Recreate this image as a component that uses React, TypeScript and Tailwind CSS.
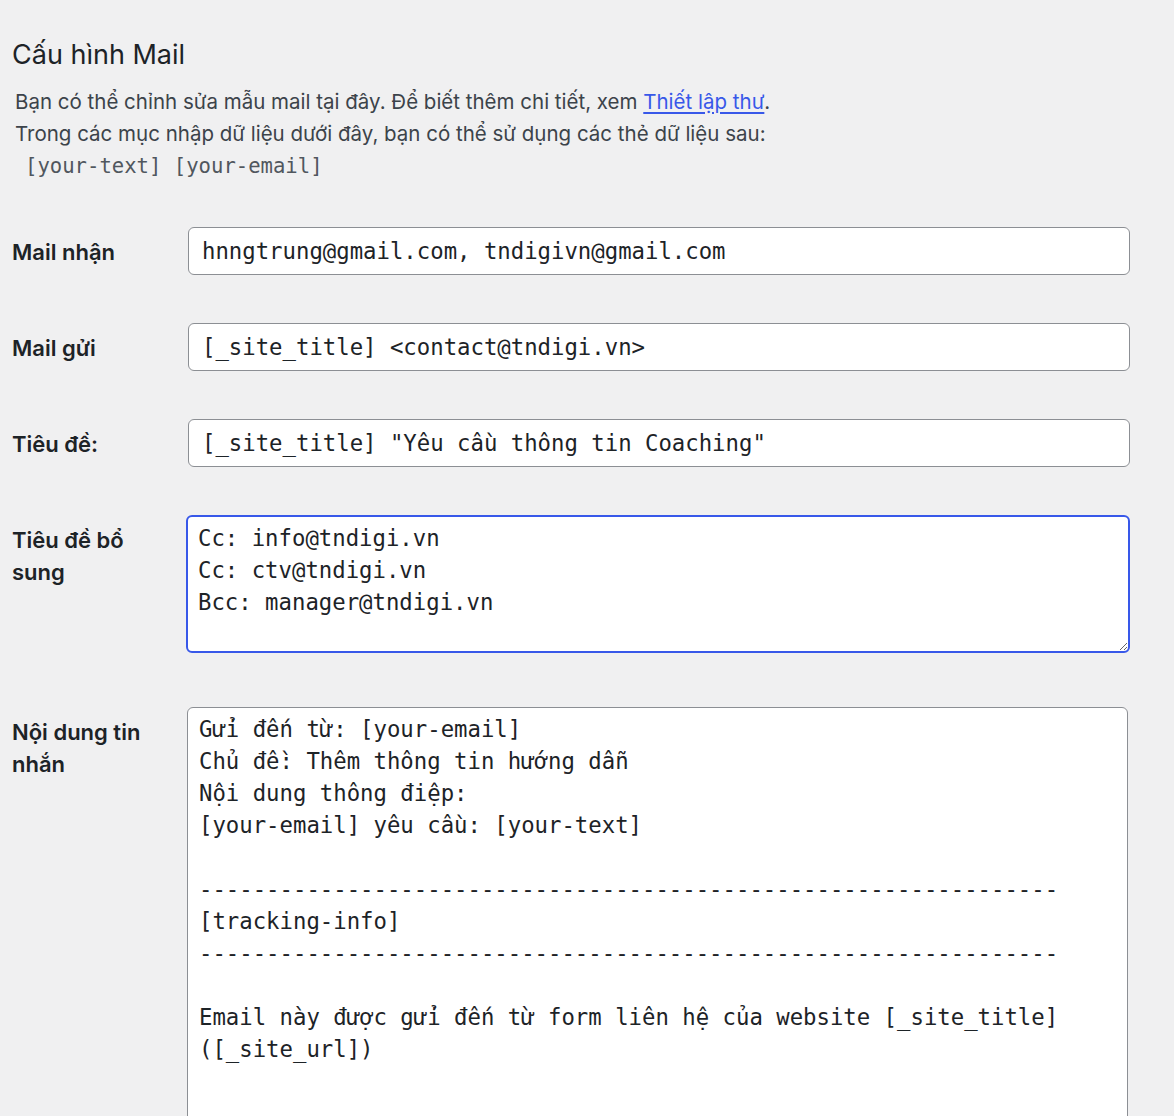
import React from "react";

const dashes = "-".repeat(64);

const bodyText = [
  "Gửi đến từ: [your-email]",
  "Chủ đề: Thêm thông tin hướng dẫn",
  "Nội dung thông điệp:",
  "[your-email] yêu cầu: [your-text]",
  "",
  dashes,
  "[tracking-info]",
  dashes,
  "",
  "Email này được gửi đến từ form liên hệ của website [_site_title] ([_site_url])",
  "",
].join("\n");

const headersText = "Cc: info@tndigi.vn\nCc: ctv@tndigi.vn\nBcc: manager@tndigi.vn";

const mono = "font-['DejaVu_Sans_Mono','Liberation_Mono',monospace]";

function Label({ children }: { children: React.ReactNode }) {
  return (
    <div className="pt-[9px] pr-6 text-[22px] leading-[32px] font-semibold text-[#1d2327]">
      {children}
    </div>
  );
}

// display-only field, drawn like a WP text input
function TextField({ value }: { value: string }) {
  return (
    <div
      className={`flex h-12 w-full items-center whitespace-pre rounded-md border border-[#8c8f94] bg-white px-[13px] text-[22.3px] leading-8 text-[#1d2327] ${mono}`}
    >
      {value}
    </div>
  );
}

export default function App() {
  return (
    <div className="h-[1116px] overflow-hidden bg-[#f0f0f1] pl-3 pt-[37px] font-['Inter','Noto_Sans',sans-serif]">
      <h2 className="text-[27px] leading-9 font-normal text-[#1d2327]">Cấu hình Mail</h2>

      <div className="mt-[13px] pl-[3px] text-[20.5px] leading-8 text-[#3c434a]">
        <p>
          Bạn có thể chỉnh sửa mẫu mail tại đây. Để biết thêm chi tiết, xem{" "}
          <a href="#" className="text-[#3858e9] underline underline-offset-[3px]">
            Thiết lập thư
          </a>
          .
        </p>
        <p>Trong các mục nhập dữ liệu dưới đây, bạn có thể sử dụng các thẻ dữ liệu sau:</p>
        <p className={`pl-[10px] text-[20.6px] text-[#50575e] ${mono}`}>[your-text] [your-email]</p>
      </div>

      <div className="mt-[45px] grid grid-cols-[176px_942px] gap-y-12">
        <Label>Mail nhận</Label>
        <TextField value="hnngtrung@gmail.com, tndigivn@gmail.com" />

        <Label>Mail gửi</Label>
        <TextField value="[_site_title] <contact@tndigi.vn>" />

        <Label>Tiêu đề:</Label>
        <TextField value={'[_site_title] "Yêu cầu thông tin Coaching"'} />

        <Label>
          Tiêu đề bổ
          <br />
          sung
        </Label>
        <textarea
          readOnly
          defaultValue={headersText}
          className={`-ml-[2px] h-[138px] w-[944px] rounded-md border-2 border-[#3858e9] bg-white px-[10px] py-[5px] text-[22.3px] leading-8 text-[#1d2327] outline-none ${mono}`}
        />

        <div className="mt-[6px]">
          <Label>
            Nội dung tin
            <br />
            nhắn
          </Label>
        </div>
        <textarea
          readOnly
          defaultValue={bodyText}
          className={`-ml-px mt-[6px] h-[480px] w-[941px] resize-none rounded-md border border-[#8c8f94] bg-white px-[11px] py-[5px] text-[22.3px] leading-8 text-[#1d2327] outline-none ${mono}`}
        />
      </div>
    </div>
  );
}
